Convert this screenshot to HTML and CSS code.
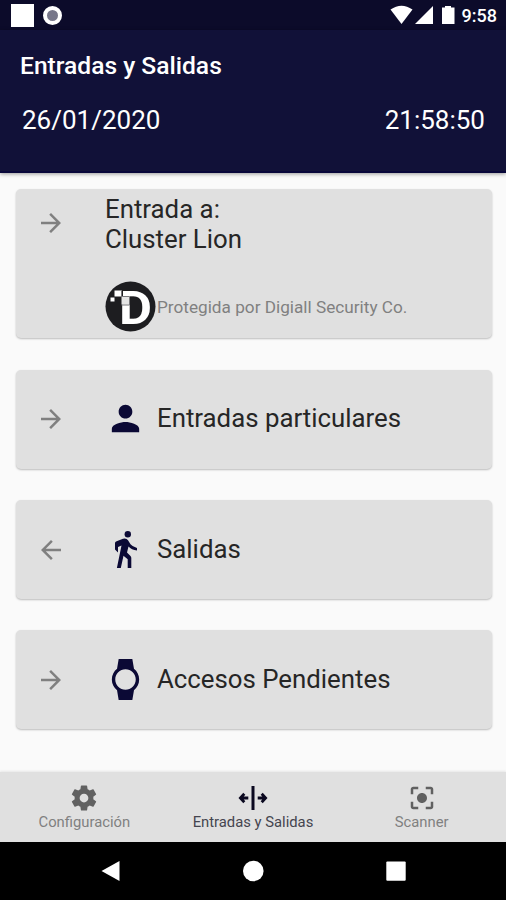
FILE: index.html
```
<!DOCTYPE html>
<html lang="es">
  <head>
    <meta charset="utf-8">
    <title>Entradas y Salidas</title>
    <link rel="stylesheet" href="styles.css">
  </head>
  <body>
  <div class="screen">

    <div class="status_bar">
      <span class="notif_square"></span>
      <span class="notif_circle"></span>
      <svg class="status_icons" width="66" height="20" viewBox="0 0 66 20">
        <path d="M.5 4.600Q11.500-3 22.500 4.600L11.500 19z"/>
        <path d="M43 1v18H25z"/>
        <path d="M52 2.500h3V1h6v1.500h3.500v16.500H52z"/>
      </svg>
      <span class="clock">9:58</span>
    </div>

    <div class="header">
      <h1>Entradas y Salidas</h1>
      <div class="datetime">
        <span class="date">26/01/2020</span>
        <span class="time">21:58:50</span>
      </div>
    </div>

    <div class="content">
      <div class="card card_main">
        <svg class="arrow" viewBox="0 0 24 24"><path d="M12 4l-1.410 1.410L16.170 11H4v2h12.170l-5.580 5.590L12 20l8-8z"/></svg>
        <div class="place">
          <p class="label">Entrada a:<br>Cluster Lion</p>
          <div class="protected">
            <svg class="logo" width="51" height="51" viewBox="0 0 51 51">
              <circle cx="25.500" cy="25.500" r="25" fill="#1d1d20"/>
              <text class="logo_letter" x="14" y="42.500" textLength="33" lengthAdjust="spacingAndGlyphs">D</text>
              <path fill="#1d1d20" d="M14 7h4v8h-4z"/>
              <path fill="#fff" d="M9.500 9.500h7v6h-7zM5.500 16.500h4v4h-4z"/>
              <path fill="#e4e4e4" d="M16.500 15.500h8v8h-8z"/>
              <path fill="none" stroke="#77777b" d="M16.500 9v6.500h8v8.500h-8"/>
            </svg>
            <span>Protegida por Digiall Security Co.</span>
          </div>
        </div>
      </div>

      <div class="card">
        <svg class="arrow" viewBox="0 0 24 24"><path d="M12 4l-1.410 1.410L16.170 11H4v2h12.170l-5.580 5.590L12 20l8-8z"/></svg>
        <svg class="icon" viewBox="0 0 24 24"><path d="M12 12c2.210 0 4-1.790 4-4s-1.790-4-4-4-4 1.790-4 4 1.790 4 4 4zm0 2c-2.670 0-8 1.340-8 4v2h16v-2c0-2.660-5.330-4-8-4z"/></svg>
        <p class="label">Entradas particulares</p>
      </div>

      <div class="card card_low">
        <svg class="arrow" viewBox="0 0 24 24"><path d="M20 11H7.830l5.590-5.590L12 4l-8 8 8 8 1.410-1.410L7.830 13H20v-2z"/></svg>
        <svg class="icon" viewBox="0 0 41 41">
          <circle cx="22.800" cy="5.300" r="3.200"/>
          <path d="M10 20.500v-6.500q0-1 1-1.500l7-2.800q3.500-.8 5 1.500l2.500 4q2 2.500 6.500 3.800v2.600q-5.500-.6-8.500-4l-1.500 6 3.500 3.500q.8.800.8 2v9.900h-3.600v-8.700l-4.200-3.500-2.700 12.200h-3.900l4.600-22.600-3.500 1.600v5.500z"/>
        </svg>
        <p class="label">Salidas</p>
      </div>

      <div class="card card_low">
        <svg class="arrow" viewBox="0 0 24 24"><path d="M12 4l-1.410 1.410L16.170 11H4v2h12.170l-5.580 5.590L12 20l8-8z"/></svg>
        <svg class="icon" viewBox="0 0 24 24"><path d="M20 12c0-2.540-1.190-4.810-3.040-6.270L16 0H8l-.95 5.730C5.190 7.190 4 9.450 4 12s1.190 4.810 3.050 6.270L8 24h8l.96-5.730C18.810 16.810 20 14.540 20 12zM6 12c0-3.310 2.690-6 6-6s6 2.690 6 6-2.690 6-6 6-6-2.690-6-6z"/></svg>
        <p class="label">Accesos Pendientes</p>
      </div>
    </div>

    <div class="tabs">
      <div class="tab">
        <svg viewBox="0 0 24 24"><path d="M19.430 12.980c.04-.32.07-.64.07-.98s-.03-.66-.07-.98l2.110-1.650c.19-.15.24-.42.12-.64l-2-3.460c-.12-.22-.39-.3-.61-.22l-2.490 1c-.52-.4-1.080-.73-1.690-.98l-.38-2.650C14.460 2.180 14.250 2 14 2h-4c-.25 0-.46.18-.49.42l-.38 2.650c-.61.25-1.170.59-1.690.98l-2.490-1c-.23-.09-.49 0-.61.22l-2 3.460c-.13.22-.07.49.12.64l2.110 1.650c-.04.32-.07.65-.07.98s.03.66.07.98l-2.110 1.650c-.19.15-.24.42-.12.64l2 3.460c.12.22.39.3.61.22l2.490-1c.52.4 1.080.73 1.690.98l.38 2.650c.03.24.24.42.49.42h4c.25 0 .46-.18.49-.42l.38-2.650c.61-.25 1.170-.59 1.690-.98l2.490 1c.23.09.49 0 .61-.22l2-3.460c.12-.22.07-.49-.12-.64l-2.110-1.650zM12 15.500c-1.930 0-3.500-1.570-3.500-3.500s1.570-3.500 3.500-3.500 3.500 1.570 3.500 3.500-1.570 3.500-3.500 3.500z"/></svg>
        <span>Configuración</span>
      </div>
      <div class="tab active">
        <svg viewBox="0 0 30 30"><path d="M13.500 3h3v24h-3z"/><path class="line" d="M10.300 15H3M6.300 10.800L2.400 15l3.900 4.200M19.700 15H27M23.700 10.800l3.900 4.200-3.900 4.200"/></svg>
        <span>Entradas y Salidas</span>
      </div>
      <div class="tab">
        <svg viewBox="0 0 24 24"><path d="M12 8c-2.210 0-4 1.790-4 4s1.790 4 4 4 4-1.790 4-4-1.790-4-4-4zm-7 7H3v4c0 1.100.9 2 2 2h4v-2H5v-4zM5 5h4V3H5c-1.100 0-2 .9-2 2v4h2V5zm14-2h-4v2h4v4h2V5c0-1.100-.9-2-2-2zm0 16h-4v2h4c1.100 0 2-.9 2-2v-4h-2v4z"/></svg>
        <span>Scanner</span>
      </div>
    </div>

    <div class="nav_bar">
      <svg width="22" height="22" viewBox="0 0 22 22"><path d="M20.500 1v20L2.500 11z"/></svg>
      <svg width="22" height="22" viewBox="0 0 22 22"><circle cx="11.300" cy="11" r="10.300"/></svg>
      <svg width="22" height="22" viewBox="0 0 22 22"><rect x="1.300" y="1.500" width="19.400" height="19.300" rx="1"/></svg>
    </div>

  </div>
  </body>
</html>
```
FILE: styles.css
```
body {
  margin: 0;
  font-family: Roboto, "Liberation Sans", sans-serif;
}
p, h1 { margin: 0; }
span { white-space: nowrap; }

.screen {
  display: flex;
  flex-direction: column;
  width: 506px;
  height: 900px;
  background: #fafafa;
  overflow: hidden;
}

.status_bar {
  display: flex;
  align-items: center;
  box-sizing: border-box;
  height: 30px;
  padding: 0 9px 0 11px;
  background: #0c0b2a;
}
.notif_square { width: 23px; height: 23px; background: #fff; }
.notif_circle {
  box-sizing: border-box;
  width: 19px;
  height: 19px;
  margin-left: 9px;
  border: 4px solid #fff;
  border-radius: 50%;
  background: #77778a;
}
.status_icons { margin-left: auto; fill: #fff; }
.clock {
  margin-left: 6px;
  color: #fff;
  font-size: 18px;
  font-weight: 500;
}

.header {
  box-sizing: border-box;
  height: 143px;
  padding: 21px 21px 0 20px;
  background: #111138;
  border-bottom: 2px solid #08073a;
  box-shadow: 0 1px 4px rgba(0, 0, 0, 0.4);
  color: #fff;
  z-index: 1;
}
h1 {
  font-size: 24.600px;
  font-weight: 500;
  line-height: 30px;
}
.datetime {
  display: flex;
  justify-content: space-between;
  margin-top: 24px;
  padding-left: 2px;
  font-size: 26px;
  line-height: 30px;
}

.content {
  flex: 1;
  display: flex;
  flex-direction: column;
  gap: 31px;
  padding: 16px 14px 0 16px;
}
.card {
  display: flex;
  align-items: center;
  box-sizing: border-box;
  height: 99px;
  padding: 0 0 2px 20px;
  border-radius: 5px;
  background: #e0e0e0;
  box-shadow: 0 1px 2px rgba(0, 0, 0, 0.25);
}
.card_main {
  align-items: flex-start;
  height: 149px;
  margin-bottom: 1px;
}
.card_low { padding-bottom: 0; }
.card_main .arrow { margin-top: 19px; }
.arrow { width: 30px; height: 30px; fill: #808080; }
.icon {
  width: 41px;
  height: 41px;
  margin-left: 39px;
  fill: #0b0935;
}
.label {
  margin: 0 0 2px 11px;
  color: #262626;
  font-size: 25.800px;
  line-height: 30px;
}
.place { margin-left: 39px; padding-top: 5px; }
.place .label { margin: 0; }
.protected {
  display: flex;
  align-items: center;
  gap: 1px;
  margin-top: 27px;
  color: #808080;
  font-size: 17.200px;
}
.logo { overflow: visible; }
.logo_letter { fill: #fff; font-size: 47px; font-weight: 700; }

.tabs {
  display: grid;
  grid-template-columns: repeat(3, 1fr);
  box-sizing: border-box;
  height: 70px;
  padding-top: 11px;
  background: #e0e0e0;
  box-shadow: 0 -1px 2px rgba(0, 0, 0, 0.08);
}
.tab {
  display: flex;
  flex-direction: column;
  align-items: center;
  color: #808080;
  font-size: 14.800px;
  line-height: 19px;
}
.tab svg { width: 30px; height: 30px; fill: #616161; }
.tab.active { color: #45454f; }
.tab.active svg { fill: #0b0920; }
.line { fill: none; stroke: #0b0920; stroke-width: 2.800; }

.nav_bar {
  display: flex;
  justify-content: center;
  align-items: center;
  gap: 121px;
  height: 58px;
  background: #000;
}
.nav_bar svg { fill: #fff; }
```
